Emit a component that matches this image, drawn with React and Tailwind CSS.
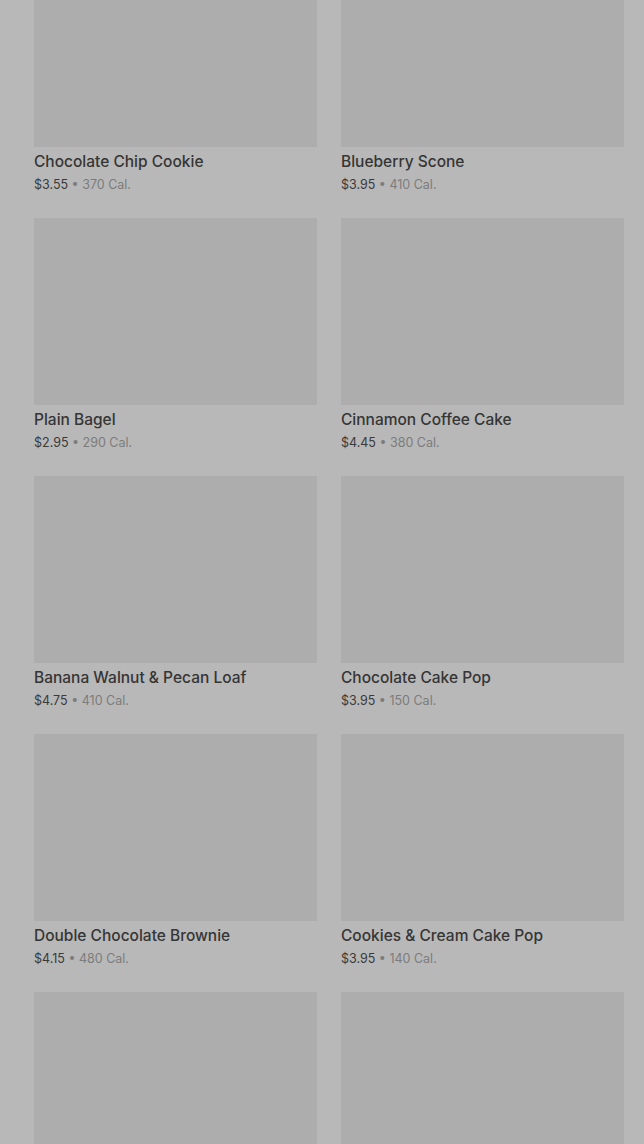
import React from 'react'

const items = [
  { name: 'Chocolate Chip Cookie', price: '$3.55', cal: '370 Cal.' },
  { name: 'Blueberry Scone', price: '$3.95', cal: '410 Cal.' },
  { name: 'Plain Bagel', price: '$2.95', cal: '290 Cal.' },
  { name: 'Cinnamon Coffee Cake', price: '$4.45', cal: '380 Cal.' },
  { name: 'Banana Walnut & Pecan Loaf', price: '$4.75', cal: '410 Cal.' },
  { name: 'Chocolate Cake Pop', price: '$3.95', cal: '150 Cal.' },
  { name: 'Double Chocolate Brownie', price: '$4.15', cal: '480 Cal.' },
  { name: 'Cookies & Cream Cake Pop', price: '$3.95', cal: '140 Cal.' },
  { name: '', price: '', cal: '' },
  { name: '', price: '', cal: '' }
]

function ProductCard({ item }) {
  return (
    <div>
      <div className="h-[187px] bg-[#adadad]"></div>
      {item.name && (
        <>
          <p className="mt-[3px] text-[15.5px] leading-[24px] font-medium text-[#353535]">
            {item.name}
          </p>
          <p className="mt-[1px] text-[12.5px] leading-[20px] text-[#3a3a3a]">
            {item.price}
            <span className="text-[#7c7c7c]"> • {item.cal}</span>
          </p>
        </>
      )}
    </div>
  )
}

export default function App() {
  return (
    <div className="w-[644px] h-[1144px] overflow-hidden bg-[#b8b8b8] font-['Inter',sans-serif]">
      <div className="-mt-[40px] pl-[34px] pr-[20px] grid grid-cols-2 gap-x-[24px] gap-y-[23px]">
        {items.map((item, i) => (
          <ProductCard key={i} item={item} />
        ))}
      </div>
    </div>
  )
}
